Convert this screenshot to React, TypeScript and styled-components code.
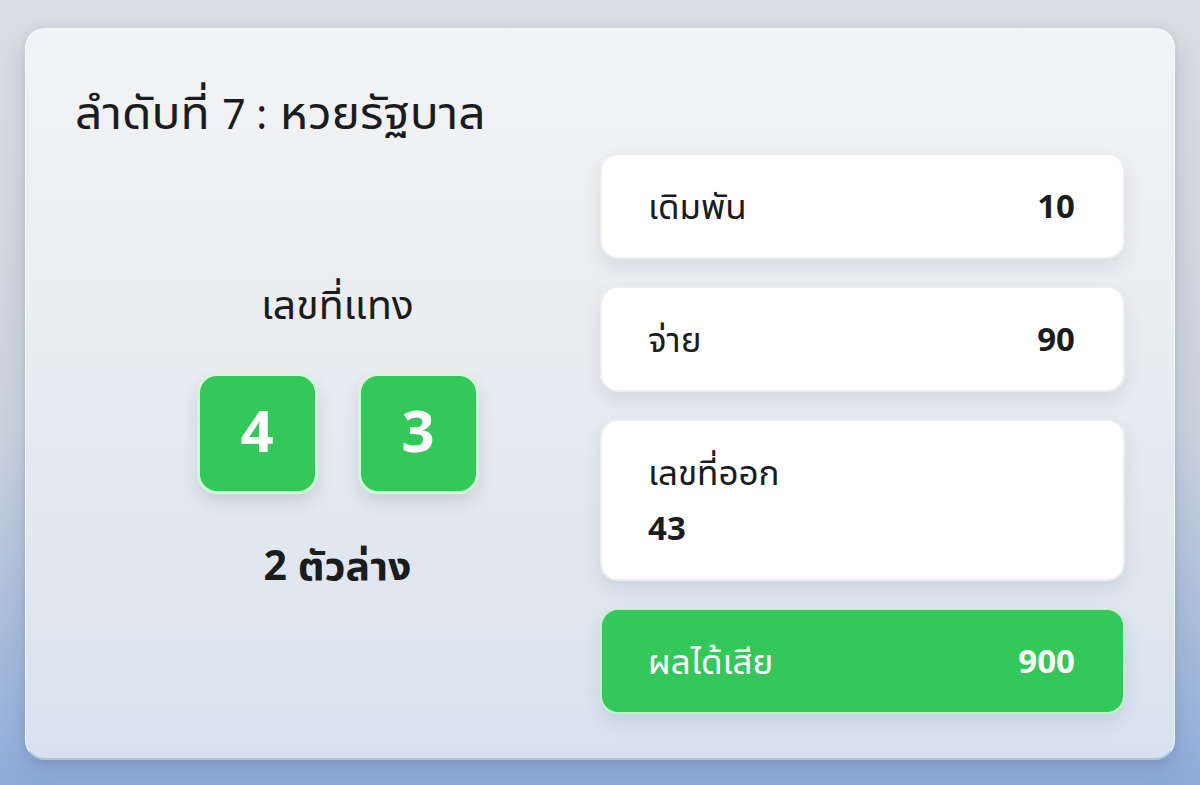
import React from "react";
import styled, { createGlobalStyle } from "styled-components";

const GlobalStyle = createGlobalStyle`
  html, body {
    margin: 0;
    padding: 0;
  }
  body {
    font-family: "Noto Sans Thai UI", "Noto Sans Thai", "Noto Sans", "DejaVu Sans", sans-serif;
    color: #1b1c1e;
  }
  * { box-sizing: border-box; }
`;

const Page = styled.div`
  min-height: 785px;
  padding: 28px 25px 25px;
  background: linear-gradient(180deg, #dcdde2 0%, #cbd2de 55%, #8dacda 100%);
`;

const Card = styled.section`
  height: 732px;
  border-radius: 20px;
  padding: 48px 49px 47px;
  background: linear-gradient(180deg, #f2f3f5 0%, #eaecf0 45%, #d8e2ef 100%);
  border: 1px solid rgba(255, 255, 255, 0.7);
  border-bottom: 2px solid #b3c3dc;
  box-shadow: 0 10px 24px rgba(60, 80, 120, 0.18), 0 2px 6px rgba(60, 80, 120, 0.12);
  display: flex;
  flex-direction: column;
`;

const Title = styled.h1`
  margin: 0;
  font-size: 48px;
  font-weight: 400;
  line-height: 68px;
`;

const TitleNum = styled.span`
  font-size: 41px;
`;

const Body = styled.div`
  display: grid;
  grid-template-columns: 1fr 1fr;
  margin-top: 6px;
`;

const BetColumn = styled.div`
  display: flex;
  flex-direction: column;
  align-items: center;
  justify-content: center;
  gap: 44px;
`;

const BetLabel = styled.div<{ $bold?: boolean }>`
  font-size: 41px;
  font-weight: ${(p) => (p.$bold ? 700 : 400)};
  line-height: 52px;
`;

const Tiles = styled.div`
  display: flex;
  gap: 40px;
`;

const Tile = styled.div`
  width: 121px;
  height: 121px;
  border-radius: 20px;
  background: #34c759;
  border: 3px solid #d2f8dc;
  box-shadow: 0 8px 16px rgba(40, 60, 90, 0.14);
  display: flex;
  align-items: center;
  justify-content: center;
  color: #ffffff;
  font-size: 58px;
  font-weight: 700;
`;

const InfoColumn = styled.div`
  display: flex;
  flex-direction: column;
  gap: 27px;
`;

const InfoBox = styled.div<{ $accent?: boolean; $stacked?: boolean }>`
  display: flex;
  flex-direction: ${(p) => (p.$stacked ? "column" : "row")};
  justify-content: ${(p) => (p.$stacked ? "flex-start" : "space-between")};
  align-items: ${(p) => (p.$stacked ? "flex-start" : "center")};
  gap: ${(p) => (p.$stacked ? "10px" : "0")};
  padding: 28px 48px 28px 46px;
  border-radius: 18px;
  background: ${(p) => (p.$accent ? "#34c759" : "#ffffff")};
  border: 2px solid ${(p) => (p.$accent ? "#c2f4cf" : "#eceef2")};
  box-shadow: 0 8px 18px rgba(40, 60, 90, 0.1);
  color: ${(p) => (p.$accent ? "#ffffff" : "#1b1c1e")};
  font-size: 35px;
  line-height: 46px;
`;

const InfoLabel = styled.span`
  font-weight: 400;
`;

const InfoValue = styled.span`
  font-weight: 700;
  font-size: 33px;
`;

export default function App() {
  return (
    <>
      <GlobalStyle />
      <Page>
        <Card>
          <Title>
            ลำดับที่ <TitleNum>7 :</TitleNum> หวยรัฐบาล
          </Title>
          <Body>
            <BetColumn>
              <BetLabel>เลขที่แทง</BetLabel>
              <Tiles>
                <Tile>4</Tile>
                <Tile>3</Tile>
              </Tiles>
              <BetLabel $bold>2 ตัวล่าง</BetLabel>
            </BetColumn>
            <InfoColumn>
              <InfoBox>
                <InfoLabel>เดิมพัน</InfoLabel>
                <InfoValue>10</InfoValue>
              </InfoBox>
              <InfoBox>
                <InfoLabel>จ่าย</InfoLabel>
                <InfoValue>90</InfoValue>
              </InfoBox>
              <InfoBox $stacked>
                <InfoLabel>เลขที่ออก</InfoLabel>
                <InfoValue>43</InfoValue>
              </InfoBox>
              <InfoBox $accent>
                <InfoLabel>ผลได้เสีย</InfoLabel>
                <InfoValue>900</InfoValue>
              </InfoBox>
            </InfoColumn>
          </Body>
        </Card>
      </Page>
    </>
  );
}
